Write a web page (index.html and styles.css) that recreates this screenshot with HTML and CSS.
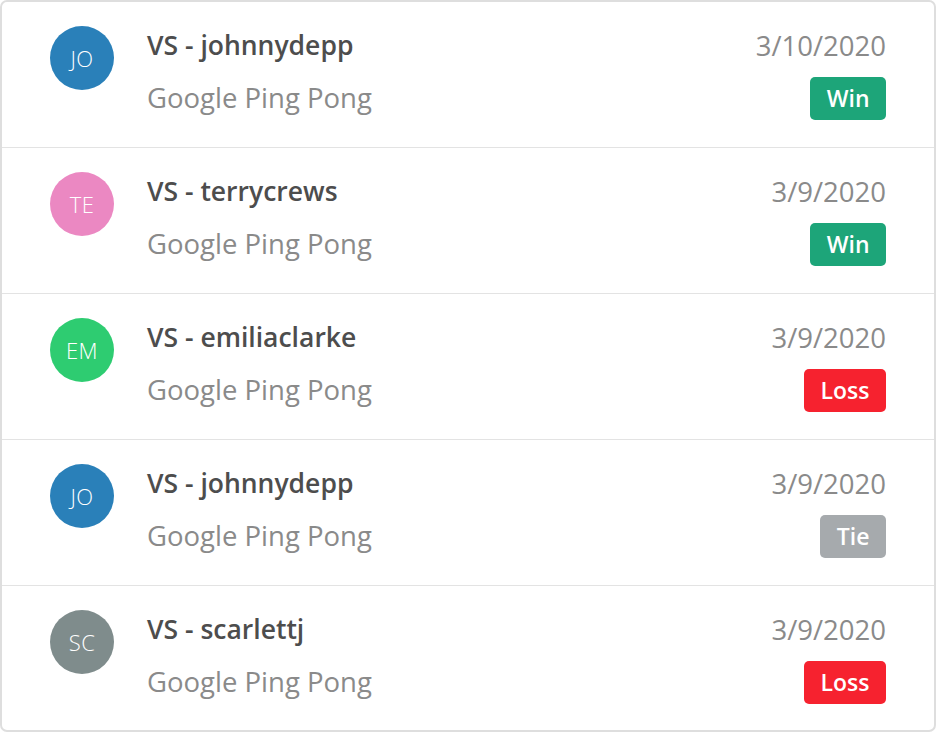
FILE: index.html
```html
<!DOCTYPE html>
<html lang="en">
<head>
<meta charset="utf-8">
<title>Match history</title>
<link rel="stylesheet" href="styles.css">
</head>
<body>
<ul class="card">
  <li class="row">
    <div class="avatar av-blue">JO</div>
    <div class="main">
      <div class="title">VS - johnnydepp</div>
      <div class="sub">Google Ping Pong</div>
    </div>
    <div class="side">
      <div class="date">3/10/2020</div>
      <span class="badge win">Win</span>
    </div>
  </li>
  <li class="row">
    <div class="avatar av-pink">TE</div>
    <div class="main">
      <div class="title">VS - terrycrews</div>
      <div class="sub">Google Ping Pong</div>
    </div>
    <div class="side">
      <div class="date">3/9/2020</div>
      <span class="badge win">Win</span>
    </div>
  </li>
  <li class="row">
    <div class="avatar av-green">EM</div>
    <div class="main">
      <div class="title">VS - emiliaclarke</div>
      <div class="sub">Google Ping Pong</div>
    </div>
    <div class="side">
      <div class="date">3/9/2020</div>
      <span class="badge loss">Loss</span>
    </div>
  </li>
  <li class="row">
    <div class="avatar av-blue">JO</div>
    <div class="main">
      <div class="title">VS - johnnydepp</div>
      <div class="sub">Google Ping Pong</div>
    </div>
    <div class="side">
      <div class="date">3/9/2020</div>
      <span class="badge tie">Tie</span>
    </div>
  </li>
  <li class="row">
    <div class="avatar av-gray">SC</div>
    <div class="main">
      <div class="title">VS - scarlettj</div>
      <div class="sub">Google Ping Pong</div>
    </div>
    <div class="side">
      <div class="date">3/9/2020</div>
      <span class="badge loss">Loss</span>
    </div>
  </li>
</ul>
</body>
</html>
```

FILE: styles.css
```css
* { box-sizing: border-box; }
html, body { margin: 0; padding: 0; background: #fff; }
body { font-family: "Open Sans", "DejaVu Sans", sans-serif; }

.card {
  list-style: none;
  margin: 0;
  padding: 0;
  width: 936px;
  height: 732px;
  border: 2px solid #dedede;
  border-radius: 7px;
  overflow: hidden;
  background: #fff;
  display: flex;
  flex-direction: column;
}

.row {
  display: flex;
  align-items: flex-start;
  height: 146px;
  flex: none;
  padding: 24px 48px 0 48px;
  border-bottom: 1px solid #e3e3e3;
}
.row:last-child { border-bottom: none; }

.avatar {
  width: 64px;
  height: 64px;
  border-radius: 50%;
  flex: none;
  display: flex;
  align-items: center;
  justify-content: center;
  color: #fff;
  font-size: 22px;
  font-weight: 300;
  letter-spacing: 0.5px;
}
.av-blue { background: #2a80b9; }
.av-pink { background: #eb88c2; }
.av-green { background: #2ecc71; }
.av-gray { background: #7f8c8c; }

.main {
  flex: 1;
  margin-left: 33px;
}
.title {
  font-size: 26.5px;
  line-height: 39px;
  font-weight: 600;
  color: #4d4d4d;
}
.sub {
  margin-top: 13px;
  font-size: 27.5px;
  line-height: 39px;
  color: #8a8a8a;
}

.side {
  display: flex;
  flex-direction: column;
  align-items: flex-end;
}
.date {
  font-size: 27.5px;
  line-height: 39px;
  color: #8a8a8a;
}
.badge {
  margin-top: 12px;
  height: 43px;
  padding: 0 16.5px;
  border-radius: 5px;
  color: #fff;
  font-size: 23px;
  font-weight: 600;
  line-height: 43px;
}
.win { background: #1da579; }
.loss { background: #f6222f; }
.tie { background: #a6aaad; }
```
